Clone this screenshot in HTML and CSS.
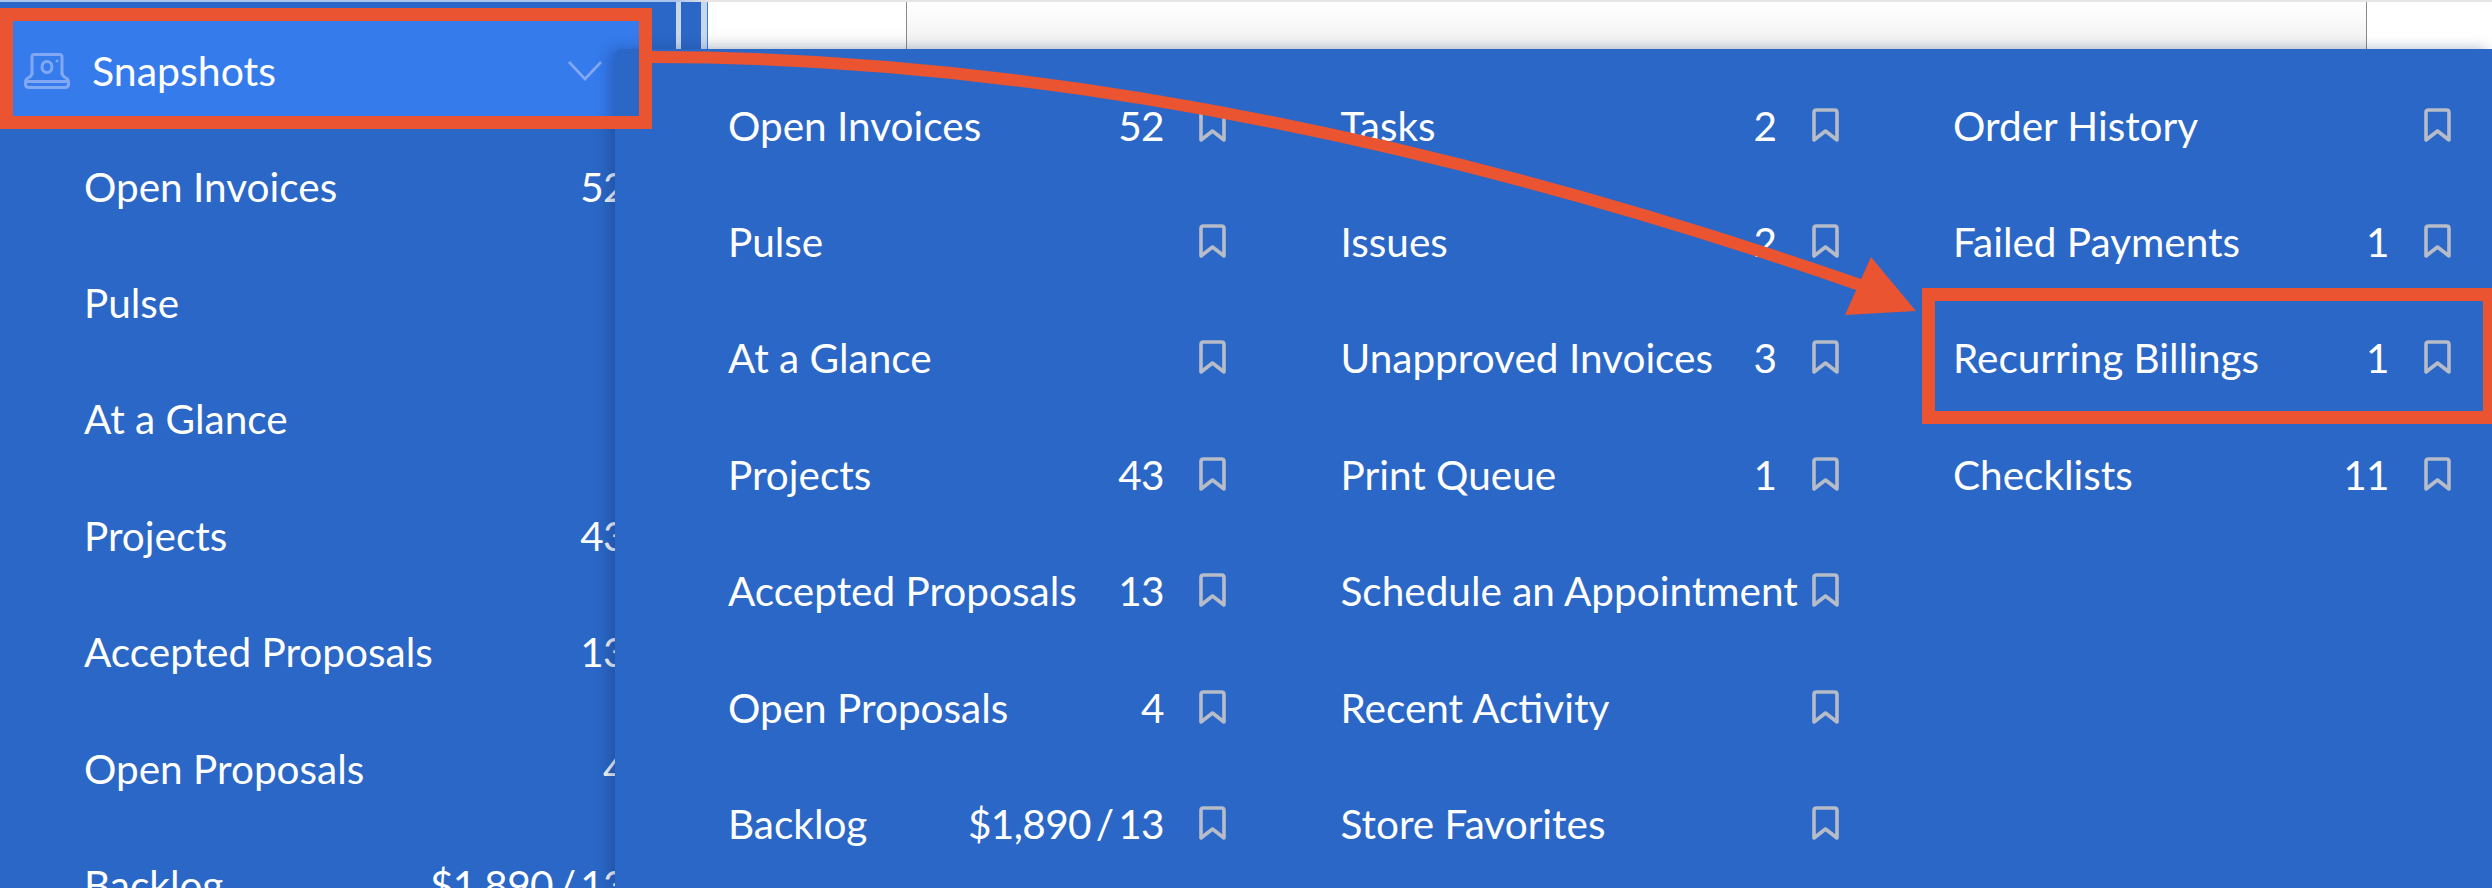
FILE: index.html
```html
<!DOCTYPE html>
<html lang="en">

<head>
    <meta charset="UTF-8" />
    <title>Snapshots</title>
    <link rel="stylesheet" href="styles.css">
</head>

<body>
    <div class="top-edge"></div>
    <div class="shell">
        <aside class="sidebar">
            <div class="side-header">
                <svg class="snap-icon" viewBox="0 0 46 36" fill="none" stroke="currentColor" stroke-width="3" stroke-linejoin="round">
                    <path d="M8 22 V4 Q8 1.5 10.5 1.5 H35.5 Q38 1.5 38 4 V22" />
                    <path d="M8 20 Q8 23 4 25 Q1.5 26.500 1.500 29 V31 Q1.500 34.500 5 34.500 H41 Q44.500 34.500 44.500 31 V29 Q44.500 26.500 42 25 Q38 23 38 20" />
                    <path d="M2 28.500 H44" />
                    <ellipse cx="23" cy="14" rx="5" ry="5.500" />
                    <circle cx="33" cy="8" r="1.500" fill="currentColor" stroke="none" />
                </svg>
                <span class="side-title">Snapshots</span>
                <svg class="chevron" viewBox="0 0 34 20" fill="none" stroke="currentColor" stroke-width="2.600">
                    <path d="M1 1 L17 18 L33 1" />
                </svg>
            </div>
            <div class="side-row"><span>Open Invoices</span><span class="count-side">52</span></div>
            <div class="side-row"><span>Pulse</span></div>
            <div class="side-row"><span>At a Glance</span></div>
            <div class="side-row"><span>Projects</span><span class="count-side">43</span></div>
            <div class="side-row"><span>Accepted Proposals</span><span class="count-side">13</span></div>
            <div class="side-row"><span>Open Proposals</span><span class="count-side">4</span></div>
            <div class="side-row"><span>Backlog</span><span class="count-side">$1,890 / 13</span></div>
        </aside>
        <div class="main">
            <div class="toolbar">
                <div class="rail"></div>
                <div class="rail rail-wide"></div>
                <div class="cell cell-first"></div>
                <div class="cell cell-mid"></div>
                <div class="cell cell-last"></div>
            </div>
        </div>
    </div>

    <svg width="0" height="0" class="defs">
        <symbol id="bookmark" viewBox="0 0 27 35">
            <path d="M2 4.500 Q2 2 4.500 2 H22.500 Q25 2 25 4.500 V32 L13.500 23 L2 32 Z" fill="none" stroke="currentColor" stroke-width="3.600" stroke-linejoin="round" />
        </symbol>
    </svg>

    <div class="flyout">
        <div class="item"><span class="name">Open Invoices</span><span class="count">52</span><svg class="mark"><use href="#bookmark" /></svg></div>
        <div class="item"><span class="name">Pulse</span><svg class="mark"><use href="#bookmark" /></svg></div>
        <div class="item"><span class="name">At a Glance</span><svg class="mark"><use href="#bookmark" /></svg></div>
        <div class="item"><span class="name">Projects</span><span class="count">43</span><svg class="mark"><use href="#bookmark" /></svg></div>
        <div class="item"><span class="name">Accepted Proposals</span><span class="count">13</span><svg class="mark"><use href="#bookmark" /></svg></div>
        <div class="item"><span class="name">Open Proposals</span><span class="count">4</span><svg class="mark"><use href="#bookmark" /></svg></div>
        <div class="item"><span class="name">Backlog</span><span class="count">$1,890 / 13</span><svg class="mark"><use href="#bookmark" /></svg></div>

        <div class="item"><span class="name">Tasks</span><span class="count">2</span><svg class="mark"><use href="#bookmark" /></svg></div>
        <div class="item"><span class="name">Issues</span><span class="count">2</span><svg class="mark"><use href="#bookmark" /></svg></div>
        <div class="item"><span class="name">Unapproved Invoices</span><span class="count">3</span><svg class="mark"><use href="#bookmark" /></svg></div>
        <div class="item"><span class="name">Print Queue</span><span class="count">1</span><svg class="mark"><use href="#bookmark" /></svg></div>
        <div class="item"><span class="name">Schedule an Appointment</span><svg class="mark"><use href="#bookmark" /></svg></div>
        <div class="item"><span class="name">Recent Activity</span><svg class="mark"><use href="#bookmark" /></svg></div>
        <div class="item"><span class="name">Store Favorites</span><svg class="mark"><use href="#bookmark" /></svg></div>

        <div class="item"><span class="name">Order History</span><svg class="mark"><use href="#bookmark" /></svg></div>
        <div class="item"><span class="name">Failed Payments</span><span class="count">1</span><svg class="mark"><use href="#bookmark" /></svg></div>
        <div class="item"><span class="name">Recurring Billings</span><span class="count">1</span><svg class="mark"><use href="#bookmark" /></svg></div>
        <div class="item"><span class="name">Checklists</span><span class="count">11</span><svg class="mark"><use href="#bookmark" /></svg></div>
    </div>

    <!-- red callout drawn over the screenshot -->
    <svg class="callout" viewBox="0 0 2492 888">
        <rect x="6.500" y="14.500" width="639" height="108" fill="none" stroke="#ea5430" stroke-width="13" />
        <rect x="1928.500" y="294.500" width="561" height="123" fill="none" stroke="#ea5430" stroke-width="13" />
        <path d="M652 57 C1000 57 1400 125 1860 285" fill="none" stroke="#ea5430" stroke-width="12" />
        <polygon points="1916,311 1871,257 1845,315" fill="#ea5430" />
    </svg>
</body>

</html>
```

FILE: styles.css
```css
body {
    margin: 0;
    width: 2492px;
    height: 888px;
    overflow: hidden;
    position: relative;
    background: #2b67c6;
    color: white;
    font-family: 'Lato', 'Liberation Sans', sans-serif;
    font-size: 40.5px;
}

.top-edge {
    height: 2px;
    background: linear-gradient(to right, #a9c3ea 0, #a9c3ea 676px, #e6e4e6 708px);
}

.shell {
    display: flex;
    height: 886px;
    overflow: hidden;
}

.sidebar {
    width: 676px;
    flex-shrink: 0;
    padding-top: 12px;
    box-sizing: border-box;
}

.side-header {
    width: 646px;
    height: 114px;
    box-sizing: border-box;
    padding: 0 50px 0 24px;
    background: #357bec;
    display: flex;
    align-items: center;
    gap: 22px;
}

.snap-icon {
    width: 46px;
    height: 36px;
    color: #83a8f3;
}

.side-title {
    flex: 1;
    font-size: 41px;
    line-height: 40px;
}

.chevron {
    width: 34px;
    height: 20px;
    color: #83a8f3;
    margin-right: -6px;
}

.side-row {
    height: 116.4px;
    padding: 0 50px 0 84px;
    display: flex;
    align-items: center;
    justify-content: space-between;
}

.count-side {
    word-spacing: -5px;
    letter-spacing: -0.6px;
}

.main {
    flex: 1;
}

.toolbar {
    height: 47px;
    display: flex;
    border-bottom: 1px solid #7f9fd6;
}

.rail {
    width: 5px;
    margin-right: 20px;
    background: #c9d6ec;
}

.rail-wide {
    width: 6px;
    margin-right: 0;
    border-right: 1px solid #2f7bf0;
}

.cell {
    background: linear-gradient(#fff, #f0f0f0);
    border-right: 1px solid #8a8a8a;
}

.cell-first {
    width: 198px;
    background: linear-gradient(#fff 55%, #f3f3f3);
}

.cell-mid {
    width: 1459px;
}

.cell-last {
    flex: 1;
    border-right: none;
    background: #fff;
}

.defs {
    position: absolute;
}

/* flyout lies over the sidebar */
.flyout {
    position: absolute;
    left: 615px;
    top: 49px;
    right: 0;
    bottom: 0;
    box-sizing: border-box;
    padding: 18px 0 0 113px;
    background: #2b67c6;
    border-top-left-radius: 8px;
    box-shadow: -6px 0 14px rgba(20, 50, 110, 0.35);
    display: grid;
    grid-auto-flow: column;
    grid-template-rows: repeat(7, 116.4px);
    grid-template-columns: repeat(3, 498px);
    column-gap: 114.5px;
}

.item {
    display: flex;
    align-items: center;
}

.name {
    flex: 1;
    white-space: nowrap;
}

.count {
    margin-right: 35px;
    word-spacing: -5px;
    letter-spacing: -0.6px;
}

.mark {
    width: 27px;
    height: 35px;
    flex-shrink: 0;
    margin-left: auto;
    color: #b6bcc8;
}

.callout {
    position: absolute;
    left: 0;
    top: 0;
    width: 2492px;
    height: 888px;
}
```
